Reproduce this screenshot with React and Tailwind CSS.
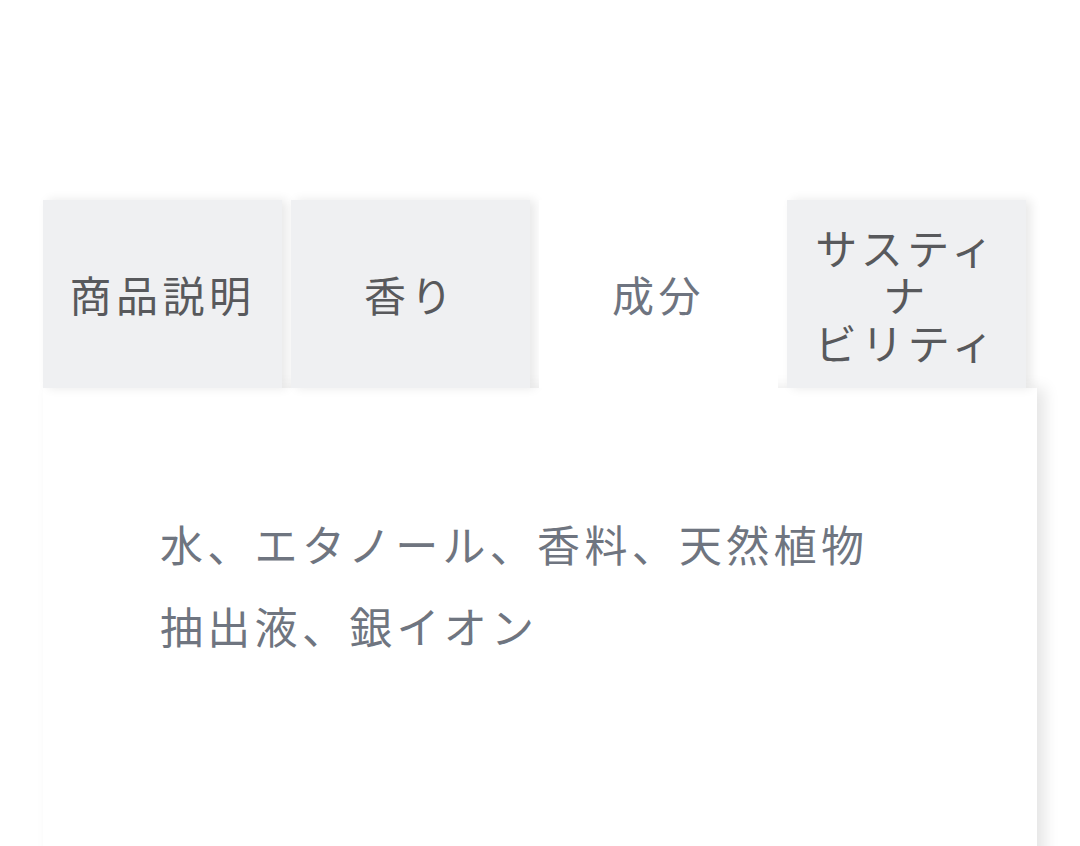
import React from "react";

const tabs = [
  { key: "desc", label: "商品説明" },
  { key: "scent", label: "香り" },
  { key: "ingredients", label: "成分" },
  { key: "sustain", label: "サスティナビリティ" },
];

export default function App() {
  const active = "ingredients";

  return (
    <div
      className="min-h-[846px] w-[1080px] overflow-hidden bg-white pt-[200px] pl-[43px]"
      style={{ fontFamily: '"Noto Sans CJK JP", "Noto Sans", sans-serif' }}
    >
      <div className="flex gap-[9px]">
        {tabs.map((t) => {
          const isActive = t.key === active;
          return (
            <button
              key={t.key}
              className={
                isActive
                  ? "flex h-[188px] w-[239px] items-center justify-center bg-white px-[20px] text-center text-[42px] leading-[1.13] tracking-[4.5px] text-[#6e7480]"
                  : "flex h-[188px] w-[239px] items-center justify-center bg-[#eff0f2] px-[20px] text-center text-[42px] leading-[1.13] tracking-[4.5px] text-[#58595c] shadow-[5px_0_10px_rgba(0,0,0,0.09)]"
              }
            >
              {t.key === "sustain" ? (
                <span>
                  サスティ
                  <br />
                  ナ
                  <br />
                  ビリティ
                </span>
              ) : (
                t.label
              )}
            </button>
          );
        })}
      </div>

      <div className="h-[480px] w-[994px] bg-white pt-[114px] pl-[117px] shadow-[8px_0_14px_rgba(0,0,0,0.1)]">
        <p className="text-[43px] leading-[82px] tracking-[4.3px] text-[#6f7580]">
          水、エタノール、香料、天然植物
          <br />
          抽出液、銀イオン
        </p>
      </div>
    </div>
  );
}
